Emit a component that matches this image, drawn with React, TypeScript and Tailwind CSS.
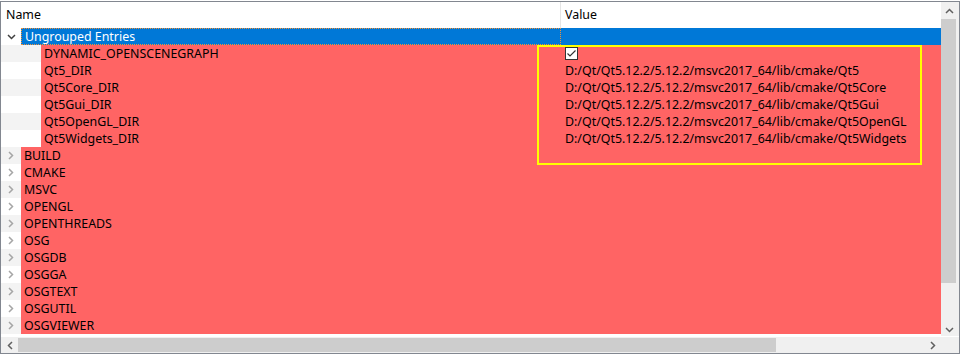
import React from "react";

const groups = [
  "BUILD",
  "CMAKE",
  "MSVC",
  "OPENGL",
  "OPENTHREADS",
  "OSG",
  "OSGDB",
  "OSGGA",
  "OSGTEXT",
  "OSGUTIL",
  "OSGVIEWER",
];

const base = "D:/Qt/Qt5.12.2/5.12.2/msvc2017_64/lib/cmake/";
const children: { name: string; value: string | null }[] = [
  { name: "DYNAMIC_OPENSCENEGRAPH", value: null },
  { name: "Qt5_DIR", value: base + "Qt5" },
  { name: "Qt5Core_DIR", value: base + "Qt5Core" },
  { name: "Qt5Gui_DIR", value: base + "Qt5Gui" },
  { name: "Qt5OpenGL_DIR", value: base + "Qt5OpenGL" },
  { name: "Qt5Widgets_DIR", value: base + "Qt5Widgets" },
];

function ChevronRight({ color = "#a6a6a6" }: { color?: string }) {
  return (
    <svg width="6" height="9" viewBox="0 0 6 9">
      <path d="M1 1 L4.5 4.5 L1 8" fill="none" stroke={color} strokeWidth="1.5" />
    </svg>
  );
}

function ChevronDown({ color = "#404040" }: { color?: string }) {
  return (
    <svg width="9" height="6" viewBox="0 0 9 6">
      <path d="M1 1 L4.5 4.5 L8 1" fill="none" stroke={color} strokeWidth="1.5" />
    </svg>
  );
}

function ChevronUp({ color = "#606060" }: { color?: string }) {
  return (
    <svg width="9" height="6" viewBox="0 0 9 6">
      <path d="M1 5 L4.5 1.5 L8 5" fill="none" stroke={color} strokeWidth="1.5" />
    </svg>
  );
}

function ChevronLeft({ color = "#606060" }: { color?: string }) {
  return (
    <svg width="6" height="9" viewBox="0 0 6 9">
      <path d="M5 1 L1.5 4.5 L5 8" fill="none" stroke={color} strokeWidth="1.5" />
    </svg>
  );
}

function CheckBox() {
  return (
    <svg width="13" height="13" viewBox="0 0 13 13">
      <rect x="0.5" y="0.5" width="12" height="12" fill="#fff" stroke="#333" />
      <path d="M2.5 6.5 L5 9 L10.5 3.5" fill="none" stroke="#333" strokeWidth="1.2" />
    </svg>
  );
}

export default function App() {
  return (
    <div
      className="relative w-[961px] h-[356px] bg-white text-[12.4px] text-black"
      style={{ fontFamily: '"Noto Sans", "Liberation Sans", sans-serif' }}
    >
      <div className="mt-[1px] w-[960px] h-[353px] border border-[#828790] flex flex-col">
        <div className="flex flex-1 min-h-0">
          {/* viewport */}
          <div className="w-[940px] flex flex-col bg-white">
            {/* header */}
            <div className="h-[26px] flex items-stretch shrink-0">
              <div className="w-[560px] flex items-center pl-[5px] border-r border-[#e5e5e5]">Name</div>
              <div className="flex-1 flex items-center pl-[4px]">Value</div>
            </div>
            {/* Ungrouped row */}
            <div className="h-[17px] flex leading-[17px]">
              <div className="w-[20px] flex items-center justify-center bg-white pl-[1px]">
                <ChevronDown />
              </div>
              <div className="flex-1 flex bg-[#0078d7] text-white">
                <div className="w-[540px] pl-[3px] border border-dotted border-[#f0923a] leading-[15px]">
                  Ungrouped Entries
                </div>
                <div className="flex-1" />
              </div>
            </div>
            {children.map((c, i) => (
              <div key={c.name} className="h-[17px] flex leading-[17px]">
                <div className={`w-[40px] ${i % 2 === 0 ? "bg-[#f3f3f3]" : "bg-white"}`} />
                <div className="flex-1 flex bg-[#ff6464]">
                  <div className="w-[520px] pl-[3px] whitespace-nowrap">{c.name}</div>
                  <div className="flex-1 pl-[4px] whitespace-nowrap flex items-center">
                    {c.value === null ? <CheckBox /> : c.value}
                  </div>
                </div>
              </div>
            ))}
            {groups.map((g, i) => (
              <div key={g} className="h-[17px] flex leading-[17px]">
                <div
                  className={`w-[20px] flex items-center justify-center ${
                    i % 2 === 0 ? "bg-[#f3f3f3]" : "bg-white"
                  }`}
                >
                  <ChevronRight />
                </div>
                <div className="flex-1 bg-[#ff6464] pl-[3px] whitespace-nowrap">{g}</div>
              </div>
            ))}
          </div>
          {/* vertical scrollbar */}
          <div className="w-[18px] bg-[#f0f0f0] flex flex-col">
            <div className="h-[17px] flex items-center justify-center pr-[2px]">
              <ChevronUp />
            </div>
            <div className="h-[264px] w-[15px] bg-[#cdcdcd]" />
            <div className="flex-1" />
            <div className="h-[17px] flex items-center justify-center pr-[2px] mb-[-2px]">
              <ChevronDown color="#606060" />
            </div>
          </div>
        </div>
        {/* horizontal scrollbar */}
        <div className="h-[16px] flex shrink-0 mt-[1px]">
          <div className="w-[940px] bg-[#f0f0f0] flex items-center">
            <div className="w-[17px] h-full flex items-center justify-center">
              <ChevronLeft />
            </div>
            <div className="w-[758px] h-[14px] bg-[#cdcdcd]" />
            <div className="flex-1" />
            <div className="w-[17px] h-full flex items-center justify-center">
              <ChevronRight color="#606060" />
            </div>
          </div>
          <div className="flex-1 bg-[#f0f0f0]" />
        </div>
      </div>
      {/* yellow annotation */}
      <div className="absolute left-[537px] top-[44px] w-[385px] h-[120px] border-2 border-[#ffff00]" />
    </div>
  );
}
